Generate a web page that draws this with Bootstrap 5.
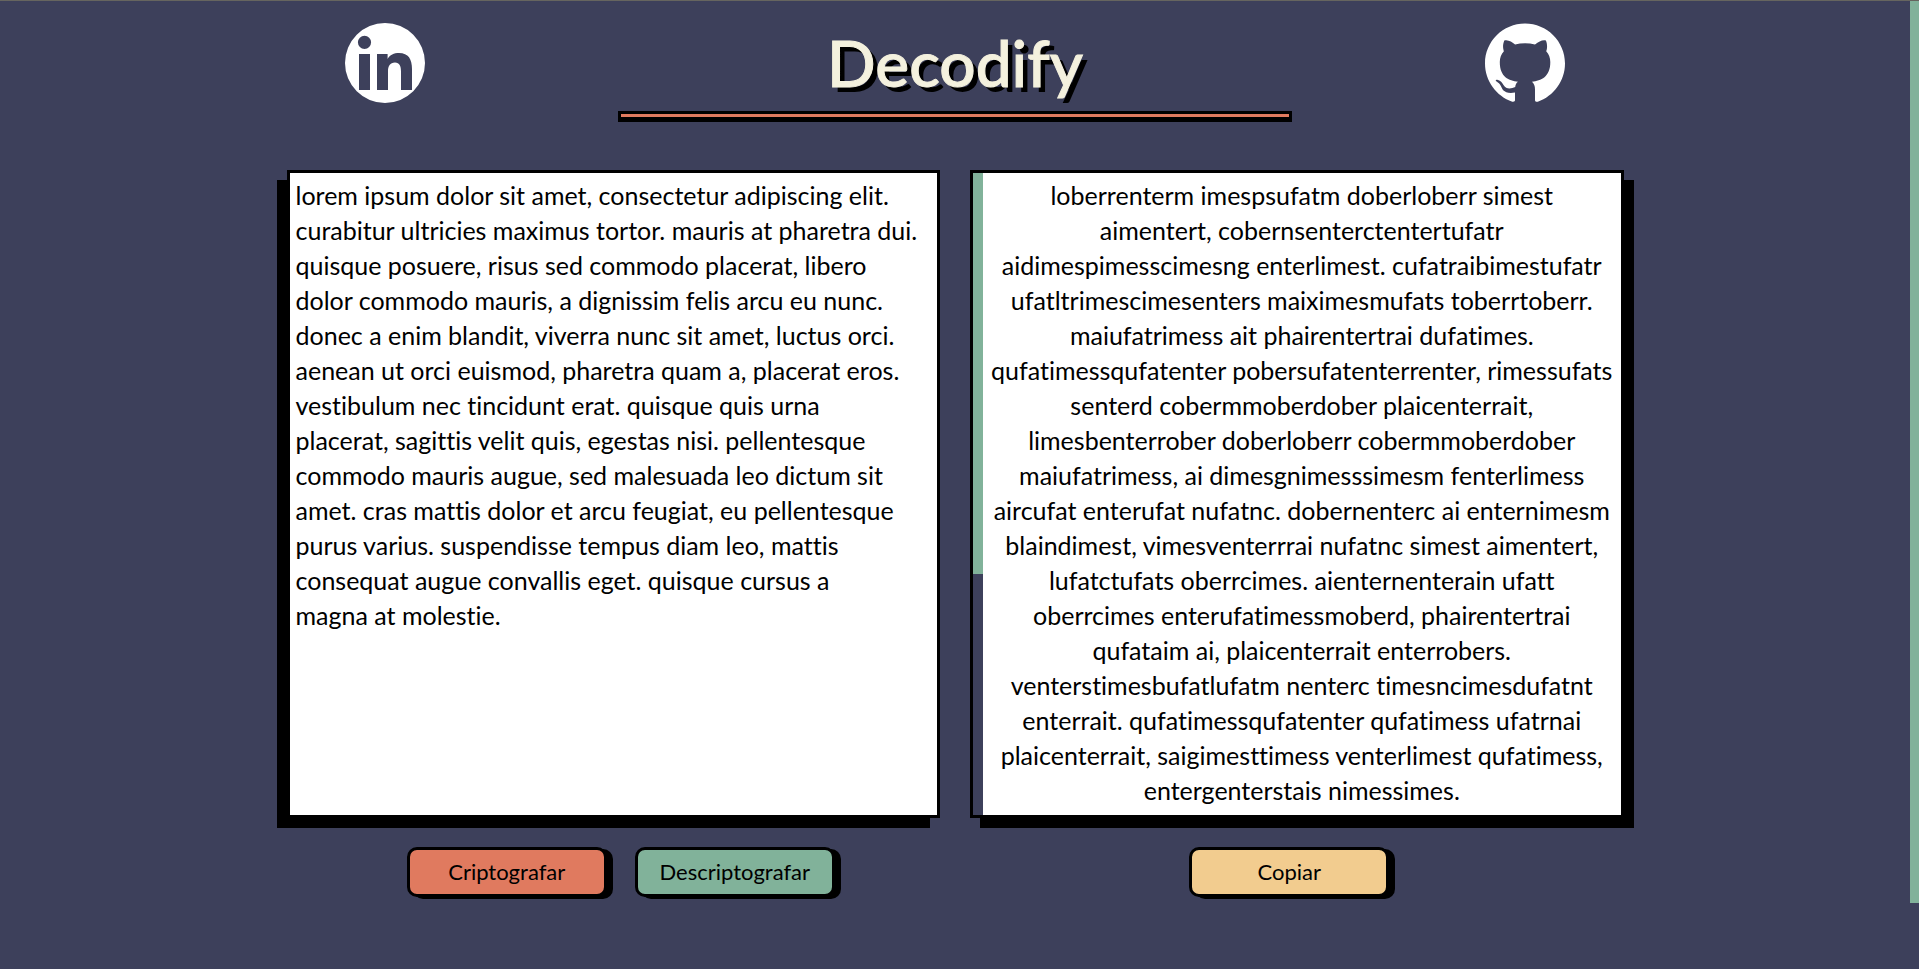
<!DOCTYPE html>
<html lang="pt-BR">
<head>
<meta charset="utf-8">
<meta name="viewport" content="width=device-width, initial-scale=1">
<title>Decodify</title>
<link rel="stylesheet" href="https://cdn.jsdelivr.net/npm/bootstrap@5.3.0/dist/css/bootstrap.min.css">
<script src="https://cdn.jsdelivr.net/npm/bootstrap@5.3.0/dist/js/bootstrap.bundle.min.js"></script>
<style>
  :root { --night: #3d405b; --mint: #81b29a; --clay: #e07a5f; --sand: #f2cc8f; --cream: #f4f1de; }
  body { background: var(--night); color: #000; font-family: Lato, sans-serif; font-variant-ligatures: none; border-top: 1px solid #66655f; }
  .page-track { width: 9px; }
  .page-thumb { height: 93.2%; background: var(--mint); }
  .top-bar { padding: 0 8%; }
  .brand-col { width: 42%; }
  .side-icon { margin-top: 22px; }
  .side-icon svg { width: 80px; height: 80px; display: block; }
  .brand-title { color: var(--cream); font-size: 64px; line-height: 72px; font-weight: 500; -webkit-text-stroke: 1px var(--cream); text-shadow: 5px 5px 0 #000; margin: 26px 0 12px; }
  .brand-rule { height: 9px; background: var(--clay); border: 3px solid #000; box-shadow: 0 2px 0 #000; }
  .workspace { width: 70%; margin-top: 50px; }
  .panels { gap: 30px; }
  .panel-box { flex: 1 1 0; min-width: 0; border: 3px solid #000; height: 648px; background: #fff; }
  .panel-in { box-shadow: -10px 10px 0 #000; }
  .panel-out { box-shadow: 10px 10px 0 #000; }
  .panel-text { border: 0; outline: 0; resize: none; width: 100%; height: 100%; background: transparent; font-size: 25px; line-height: 35px; padding: 5px 0 0 6px; white-space: pre; overflow: hidden; color: #000; font-variant-ligatures: none; }
  .panel-out .panel-text { text-align: center; padding: 5px 0 0; }
  .text-track { width: 10px; background: var(--night); }
  .text-thumb { height: 62.5%; background: var(--mint); }
  .actions { margin-top: 29px; }
  .action-group { gap: 28px; }
  .btn-action { width: 200px; height: 50px; border: 3px solid #000; border-radius: 10px; box-shadow: 6px 2px 0 #000; font-size: 22px; line-height: 30px; padding: 0; color: #000; }
  .btn-action:hover { color: #000; border-color: #000; }
  .btn-clay, .btn-clay:hover { background: var(--clay); }
  .btn-mint, .btn-mint:hover { background: var(--mint); }
  .btn-sand, .btn-sand:hover { background: var(--sand); }
</style>
</head>
<body class="d-flex min-vh-100">
<div class="flex-grow-1">
  <header class="top-bar d-flex align-items-start">
    <div class="flex-fill d-flex justify-content-center">
      <a class="side-icon" href="#linkedin" aria-label="LinkedIn">
        <svg viewBox="0 0 80 80"><path fill="#fff" fill-rule="evenodd" d="M40 0a40 40 0 1 0 0 80a40 40 0 0 0 0-80zM19.500 12.700a6.600 6.600 0 1 1 0 13.200a6.600 6.600 0 0 1 0-13.200zM14 31h11v36H14zM32 31h10.600v4.900C44.800 32 49 30 54 30C63.500 30 67 36.300 67 46V67H56V48.500C56 43 54.500 39.500 50 39.500C45 39.500 43 43.200 43 48V67H32z"/></svg>
      </a>
    </div>
    <div class="brand-col text-center">
      <h1 class="brand-title">Decodify</h1>
      <div class="brand-rule"></div>
    </div>
    <div class="flex-fill d-flex justify-content-center">
      <a class="side-icon" href="#github" aria-label="GitHub">
        <svg viewBox="0 0 80 80"><path fill="#fff" d="M40 .600C18 .600 0 18.500 0 40.500C0 58 11.400 73.200 27.300 78.700C29.300 79.100 30 78 30 77V69.500C19 71.700 16.800 65 16.600 64.500C15.100 60.500 12.700 59.300 11.500 58.500C9.800 57 11 56.500 13 57C15.700 57.500 17.600 60.500 18.300 61.700C21.500 67 26.500 65.500 30.200 64C30.500 61.500 31.500 59.600 33 58.700C24 57.700 14.800 54.200 14.800 39C14.800 34.600 16.300 31 18.900 28.200C18.400 26.800 17.100 23 19.300 17.500C23 16.300 27 19 30.100 21.400C36.500 19.800 43.500 19.800 50 21.400C54 18.500 57.500 16.500 60.900 17.500C62.700 22 62.100 26 61.200 28.200C63.800 31 65.300 34.600 65.300 39C65.300 54.200 56 57.600 47 58.700C49 60.400 50 62.900 50 66.500V77C50 78 50.700 79.200 52.800 78.700C68.600 73.200 80 58 80 40.500C80 18.500 62 .600 40 .600z"/></svg>
      </a>
    </div>
  </header>
  <main class="workspace mx-auto">
    <div class="panels d-flex">
      <div class="panel-box panel-in">
        <textarea class="panel-text d-block" aria-label="Texto" spellcheck="false">lorem ipsum dolor sit amet, consectetur adipiscing elit.
curabitur ultricies maximus tortor. mauris at pharetra dui.
quisque posuere, risus sed commodo placerat, libero
dolor commodo mauris, a dignissim felis arcu eu nunc.
donec a enim blandit, viverra nunc sit amet, luctus orci.
aenean ut orci euismod, pharetra quam a, placerat eros.
vestibulum nec tincidunt erat. quisque quis urna
placerat, sagittis velit quis, egestas nisi. pellentesque
commodo mauris augue, sed malesuada leo dictum sit
amet. cras mattis dolor et arcu feugiat, eu pellentesque
purus varius. suspendisse tempus diam leo, mattis
consequat augue convallis eget. quisque cursus a
magna at molestie.</textarea>
      </div>
      <div class="panel-box panel-out d-flex">
        <div class="text-track flex-shrink-0"><div class="text-thumb"></div></div>
        <textarea class="panel-text" aria-label="Resultado" spellcheck="false" readonly>loberrenterm imespsufatm doberloberr simest
aimentert, cobernsenterctentertufatr
aidimespimesscimesng enterlimest. cufatraibimestufatr
ufatltrimescimesenters maiximesmufats toberrtoberr.
maiufatrimess ait phairentertrai dufatimes.
qufatimessqufatenter pobersufatenterrenter, rimessufats
senterd cobermmoberdober plaicenterrait,
limesbenterrober doberloberr cobermmoberdober
maiufatrimess, ai dimesgnimesssimesm fenterlimess
aircufat enterufat nufatnc. dobernenterc ai enternimesm
blaindimest, vimesventerrrai nufatnc simest aimentert,
lufatctufats oberrcimes. aienternenterain ufatt
oberrcimes enterufatimessmoberd, phairentertrai
qufataim ai, plaicenterrait enterrobers.
venterstimesbufatlufatm nenterc timesncimesdufatnt
enterrait. qufatimessqufatenter qufatimess ufatrnai
plaicenterrait, saigimesttimess venterlimest qufatimess,
entergenterstais nimessimes.</textarea>
      </div>
    </div>
    <div class="actions d-flex">
      <div class="action-group w-50 d-flex justify-content-center">
        <button type="button" class="btn btn-action btn-clay">Criptografar</button>
        <button type="button" class="btn btn-action btn-mint">Descriptografar</button>
      </div>
      <div class="action-group w-50 d-flex justify-content-center">
        <button type="button" class="btn btn-action btn-sand">Copiar</button>
      </div>
    </div>
  </main>
</div>
<div class="page-track flex-shrink-0"><div class="page-thumb"></div></div>
</body>
</html>
